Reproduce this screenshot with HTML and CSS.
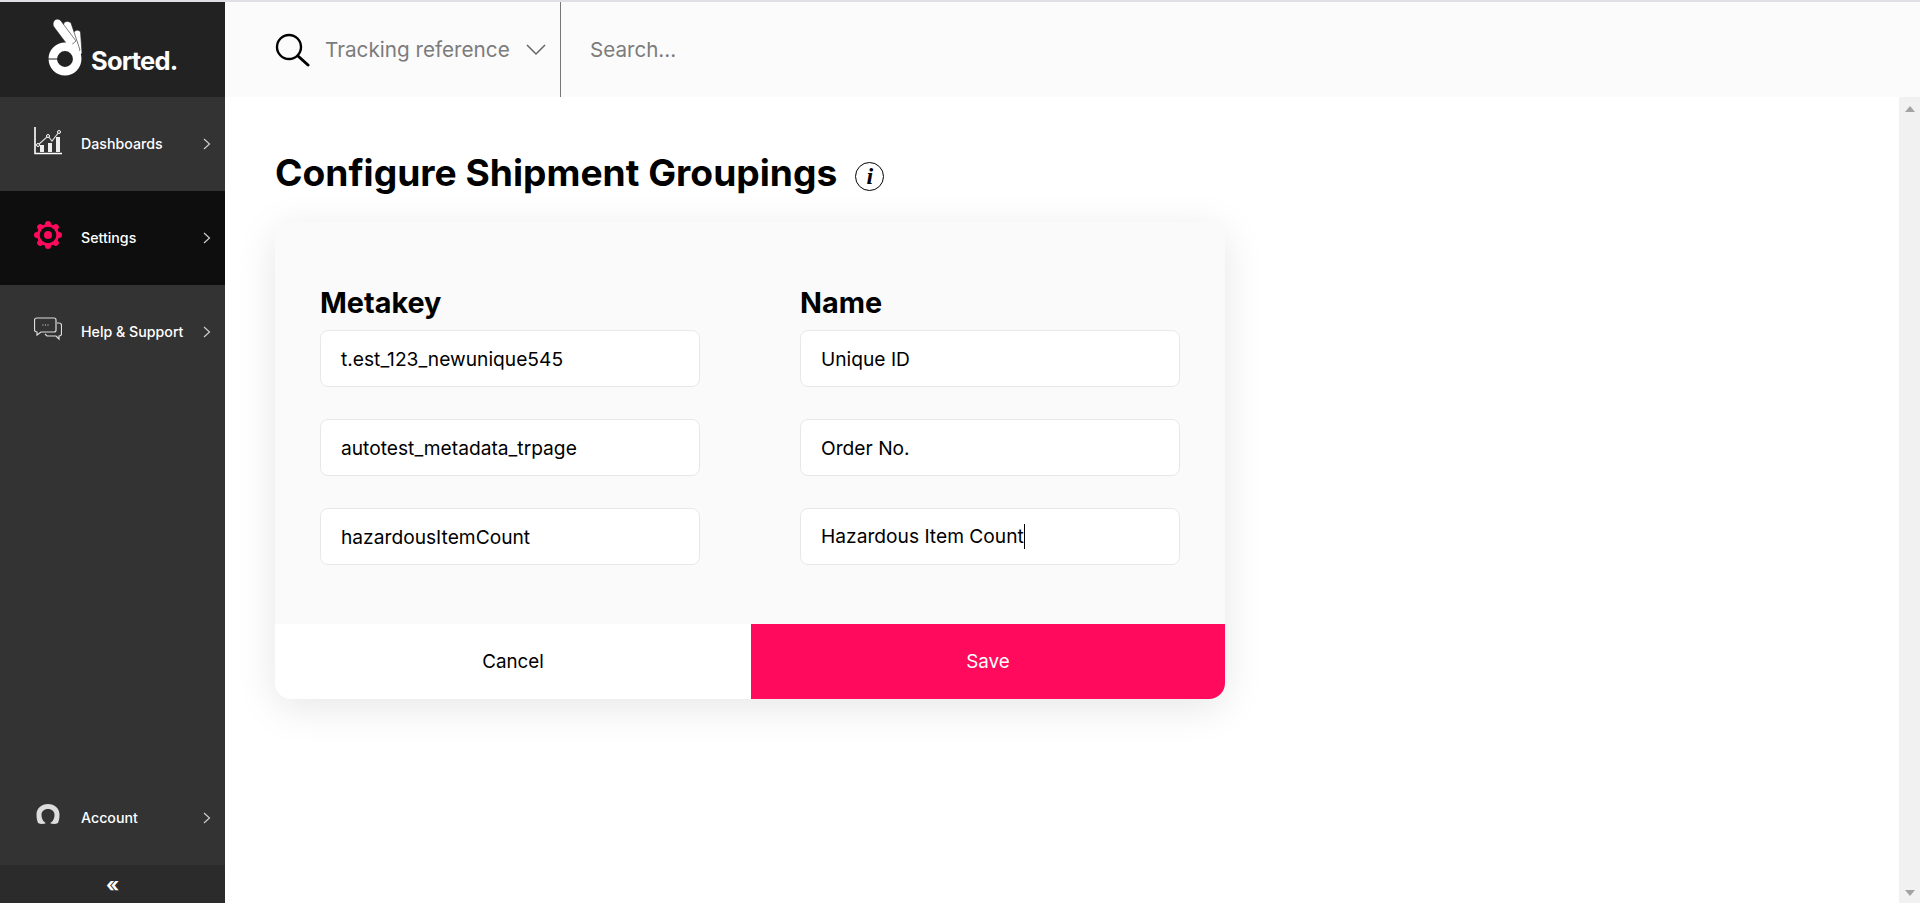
FILE: index.html
```html
<!DOCTYPE html>
<html lang="en">
<head>
    <meta charset="UTF-8">
    <meta name="viewport" content="width=device-width, initial-scale=1.0">
    <title>Configure Shipment Groupings</title>
    <link rel="stylesheet" href="styles.css">
</head>
<body>

    <aside class="sidebar">
        <div class="logo">
            <svg class="logo-mark" width="40" height="60" viewBox="0 0 40 60">
                <g fill="#fff" stroke="#222" stroke-width="0.6">
                    <path d="M28 15c1.500-1.500 4.500-1 5.500 1l1.500 21-4 5-5-23c-.5-1.500 1-3 2-4z"/>
                    <path d="M17 7c1-2 5-2 7 0l9 27-4 3L17 13c-1-2-1-4 0-6z"/>
                    <path d="M7 5c1.500-2.500 5-2.500 7 0l15 20-7 6L7 11c-1.500-2-1-4.500 0-6z"/>
                </g>
                <circle cx="18" cy="43" r="12.200" fill="none" stroke="#fff" stroke-width="8.500"/>
                <path d="M1 43h10" stroke="#222" stroke-width="1"/>
            </svg>
            <span class="logo-text">Sorted.</span>
        </div>

        <nav class="nav">
            <a class="nav-item">
                <svg class="nav-icon" width="28" height="28" viewBox="0 0 28 28" fill="none" stroke="#fff">
                    <path d="M1 0v26.500h27" stroke-width="1.600"/>
                    <path d="M8 18v7M16 16v9M24 10v15" stroke-width="4" stroke="#eee"/>
                    <path d="M4 18l10-9 4 5 7-9" stroke-width="1.200" stroke="#ddd"/>
                    <circle cx="4" cy="18" r="1.500" fill="#333" stroke-width="1"/>
                    <circle cx="14" cy="9" r="1.500" fill="#333" stroke-width="1"/>
                    <circle cx="25" cy="5" r="1.500" fill="#333" stroke-width="1"/>
                </svg>
                <span class="nav-label">Dashboards</span>
                <svg class="chevron" width="8" height="12" viewBox="0 0 8 12"><path d="M1 1l5.5 5L1 11"/></svg>
            </a>
            <a class="nav-item active">
                <svg class="nav-icon" width="28" height="28" viewBox="0 0 28 28">
                    <g stroke="#ff0a5c" stroke-width="6" stroke-linecap="round">
                        <path d="M14 3v22M3 14h22M6.200 6.200l15.600 15.600M21.800 6.200L6.200 21.800"/>
                    </g>
                    <circle cx="14" cy="14" r="11" fill="#ff0a5c"/>
                    <circle cx="14" cy="14" r="8.300" fill="#0e0e0e"/>
                    <circle cx="14" cy="14" r="4" fill="#ff0a5c"/>
                </svg>
                <span class="nav-label">Settings</span>
                <svg class="chevron" width="8" height="12" viewBox="0 0 8 12"><path d="M1 1l5.5 5L1 11"/></svg>
            </a>
            <a class="nav-item">
                <svg class="nav-icon" width="28" height="24" viewBox="0 0 28 24" fill="none" stroke="#ddd" stroke-width="1.200">
                    <path d="M3 1h17c1.500 0 2 1 2 2v10c0 1-.5 2-2 2H7l-4 3v-3c-1.500 0-2.500-1-2.500-2V3C.5 2 1.500 1 3 1z"/>
                    <path d="M23 6h2c1.500 0 2.500 1 2.500 2v9c0 1-1 2-2.500 2v3l-3-3h-9l-2-2"/>
                    <path d="M8.500 8h1M11 8h1M13.500 8h1"/>
                </svg>
                <span class="nav-label">Help &amp; Support</span>
                <svg class="chevron" width="8" height="12" viewBox="0 0 8 12"><path d="M1 1l5.5 5L1 11"/></svg>
            </a>
        </nav>

        <a class="nav-item account">
            <svg class="nav-icon" width="28" height="21" viewBox="-2 0 28 21">
                <path d="M12 0c6.500 0 11.500 4.500 11.500 10.500 0 3.500-.5 6-1.500 8.500-2 1.200-5 1.200-7.500.5-.5-1 1.500-1.500 2.500-3 1-2 1.500-3.500 1.500-6 0-3-2.500-5.500-6.500-5.500S5.500 7.500 5.500 10.500c0 2.500.5 4 1.500 6 1 1.500 3 2 2.500 3-2.500.7-5.500.7-7.500-.5C1 16.500.5 14 .5 10.500.5 4.500 5.500 0 12 0z" fill="#ddd"/>
            </svg>
            <span class="nav-label">Account</span>
            <svg class="chevron" width="8" height="12" viewBox="0 0 8 12"><path d="M1 1l5.5 5L1 11"/></svg>
        </a>
        <div class="collapse">&laquo;</div>
    </aside>

    <div class="main">
        <header class="topbar">
            <div class="search-type">
                <svg class="search-icon" width="36" height="34" viewBox="0 0 36 34" fill="none" stroke="#000">
                    <circle cx="14" cy="14" r="12" stroke-width="2.400"/>
                    <path d="M23 23l10 9" stroke-width="3" stroke-linecap="round"/>
                </svg>
                <span class="search-type-label">Tracking reference</span>
                <svg class="search-caret" width="20" height="12" viewBox="0 0 20 12" fill="none" stroke="#666" stroke-width="1.500"><path d="M1 1l9 9 9-9"/></svg>
            </div>
            <div class="search-text">Search...</div>
        </header>

        <div class="content-row">
            <main class="content">
                <div class="title-row">
                    <h1>Configure Shipment Groupings</h1>
                    <span class="info">i</span>
                </div>

                <section class="card">
                    <div class="card-body">
                        <div class="col">
                            <h2>Metakey</h2>
                            <div class="field">t.est_123_newunique545</div>
                            <div class="field">autotest_metadata_trpage</div>
                            <div class="field">hazardousItemCount</div>
                        </div>
                        <div class="col">
                            <h2>Name</h2>
                            <div class="field">Unique ID</div>
                            <div class="field">Order No.</div>
                            <div class="field"><span class="focused">Hazardous Item Count</span></div>
                        </div>
                    </div>
                    <div class="card-actions">
                        <button class="btn-cancel">Cancel</button>
                        <button class="btn-save">Save</button>
                    </div>
                </section>
            </main>

            <div class="scrollbar">
                <svg width="10" height="6" viewBox="0 0 10 6"><path d="M5 0l5 6H0z" fill="#a3a3a3"/></svg>
                <svg width="10" height="6" viewBox="0 0 10 6"><path d="M0 0h10L5 6z" fill="#a3a3a3"/></svg>
            </div>
        </div>
    </div>

</body>
</html>
```

FILE: styles.css
```css
* {
    box-sizing: border-box;
}

body {
    font-family: Inter, 'Noto Sans', sans-serif;
    margin: 0;
    height: 903px;
    overflow: hidden;
    display: flex;
    border-top: 2px solid #dfdfe6;
    background-color: white;
    color: #000;
}

.sidebar {
    width: 225px;
    flex-shrink: 0;
    background-color: #333;
    display: flex;
    flex-direction: column;
}

.logo {
    height: 95px;
    background-color: #222;
    display: flex;
    align-items: flex-end;
    padding: 0 0 21px 47px;
    gap: 4px;
}

.logo-mark {
    display: block;
}

.logo-text {
    color: white;
    font-size: 25.5px;
    font-weight: 700;
    letter-spacing: -0.8px;
    line-height: 30px;
}

.nav {
    flex: 1;
}

.nav-item {
    height: 94px;
    display: flex;
    align-items: center;
    padding: 0 0 1px 34px;
    color: white;
    font-size: 14.2px;
    font-weight: 500;
}

.nav-item.active {
    background-color: #0e0e0e;
}

.nav-icon {
    flex-shrink: 0;
    margin-bottom: 5px;
}

.account .nav-icon {
    margin-bottom: 7px;
}

.nav-label {
    margin-left: 19px;
    white-space: nowrap;
}

.chevron {
    position: absolute;
    left: 203px;
    fill: none;
    stroke: #ccc;
    stroke-width: 1.2;
}

.collapse {
    height: 38px;
    padding-top: 2px;
    background-color: #2b2b2b;
    color: white;
    font-size: 20px;
    font-weight: 700;
    text-align: center;
    line-height: 36px;
}

.main {
    flex: 1;
    min-width: 0;
    display: flex;
    flex-direction: column;
}

.topbar {
    height: 95px;
    background-color: #fbfbfb;
    display: flex;
}

.search-type {
    width: 336px;
    display: flex;
    align-items: center;
    padding-left: 50px;
    border-right: 1px solid #777;
}

.search-icon {
    flex-shrink: 0;
}

.search-type-label {
    margin-left: 14px;
    font-size: 20.7px;
    color: #7c7c7c;
    white-space: nowrap;
}

.search-caret {
    margin-left: 16px;
}

.search-text {
    margin-left: 29px;
    align-self: center;
    font-size: 20.6px;
    color: #7c7c7c;
}

.content-row {
    flex: 1;
    display: flex;
    min-height: 0;
}

.content {
    flex: 1;
    padding: 48px 0 0 50px;
}

.title-row {
    display: flex;
    align-items: center;
    height: 60px;
}

h1 {
    margin: 0 0 5px;
    font-size: 37.2px;
    font-weight: 700;
    white-space: nowrap;
}

.info {
    width: 29px;
    height: 29px;
    margin: 2px 0 0 18px;
    border: 1px solid #000;
    border-radius: 50%;
    font-family: 'Liberation Serif', serif;
    font-style: italic;
    font-weight: 700;
    font-size: 24px;
    line-height: 27px;
    text-align: center;
}

.card {
    width: 950px;
    margin-top: 17px;
    background-color: #fafafa;
    border-radius: 16px;
    box-shadow: 0 8px 40px rgba(0, 0, 0, 0.1);
    overflow: hidden;
}

.card-body {
    height: 402px;
    padding: 63px 45px 0 45px;
    display: flex;
    justify-content: space-between;
}

.col {
    width: 380px;
}

h2 {
    margin: 0 0 9px;
    font-size: 28.8px;
    font-weight: 700;
    line-height: 36px;
}

.field {
    height: 57px;
    margin-bottom: 32px;
    padding-left: 20px;
    display: flex;
    align-items: center;
    background-color: white;
    border: 1px solid #e8e8e8;
    border-radius: 8px;
    font-size: 19.2px;
}

.focused {
    border-right: 1px solid #000;
    line-height: 25px;
}

.card-actions {
    display: flex;
    height: 75px;
}

.card-actions button {
    flex: 1;
    border: none;
    font-family: inherit;
    font-size: 18.8px;
    font-weight: 400;
}

.card-actions .btn-cancel {
    flex: 0 0 476px;
    background-color: white;
    color: #000;
}

.btn-save {
    background-color: #ff0a5c;
    color: white;
}

.scrollbar {
    width: 21px;
    background-color: #f1f1f1;
    display: flex;
    flex-direction: column;
    justify-content: space-between;
    align-items: center;
    padding: 9px 0 7px;
}
```
